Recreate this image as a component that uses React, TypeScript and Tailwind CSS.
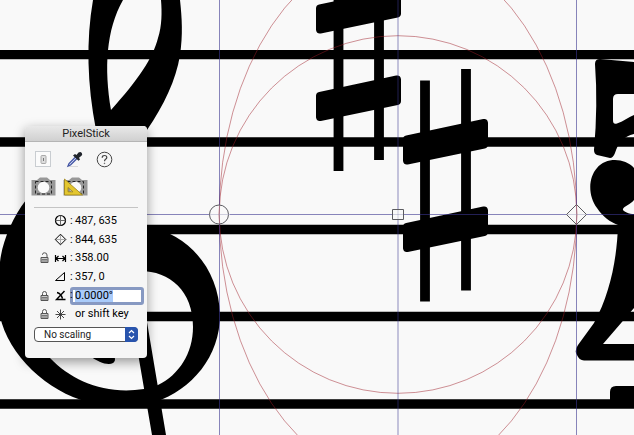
import { useEffect, useRef, type ReactNode } from "react";

const slab = "M320 96L397 79.500V101L320 117Z";

function Score() {
  return (
    <svg
      className="absolute inset-0 h-full w-full"
      viewBox="0 0 634 435"
      preserveAspectRatio="xMinYMin slice"
      aria-hidden="true"
    >
      {/* staff */}
      <path d="M0 54.700H634M0 142H634M0 229.500H634M0 316.500H634M0 404H634" stroke="#000" strokeWidth="9.300" />

      {/* clef */}
      <path
        fillRule="evenodd"
        d="M93 0C86 40 87 84 96 130H147C164 105 176 80 180 55C183 35 182 18 180 0ZM123 0C106 30 104 68 111 110C138 80 153 58 158 38C162 26 162 12 161 0Z"
      />
      <path
        fillRule="evenodd"
        d="M26 200C12 218 2 243 0 262V316C8 355 48 392 88 402H155C192 390 220 356 220 315C219 270 190 235 147 226L100 200ZM140 271C170 271 193 291 193 327C193 353 179 375 158 385L144 389C105 395 72 381 50 358L40 300Z"
      />
      <path d="M134 330L152 435H166L147 322ZM90 356C98 362 108 366 113 363C116 361 115 358 114 355Z" />

      {/* sharps */}
      <path d="M338.500 0V171M379 0V160M425 80.500V301.500M466 69V290.500" stroke="#000" strokeWidth="9.800" />
      <g stroke="#000" strokeWidth="8" strokeLinejoin="round">
        <path d={slab} />
        <path d={slab} transform="translate(0 -87.500)" />
        <path d={slab} transform="translate(87 43.500)" />
        <path d={slab} transform="translate(87 131)" />
      </g>

      {/* time signature */}
      <path d="M634 62L600 59Q595 59 595 64Q598 105 594 150Q594 154 597 155L610 158Q613 158 615 153C618 143 624 136 634 134V115C629 117 624 121 617 123.500Q613 125 613 120V99Q613 94 618 94H634Z" />
      <path d="M634 168C625 158 606 157 597 168C588 178 588 196 597 208C603 217 610 222 618 225C617 259 610 294 594 323L578 345Q574 351 577 355Q579 360 584 360.500H634V344H603L634 308V214C629 214 622 211 623 209C624 206 630 205 634 200Z" />
      <path d="M610 404V392Q610 386 616 386H634V404Z" />

      {/* guides */}
      <g fill="none" stroke="#9c1b25" strokeOpacity=".48">
        <circle cx="398" cy="214.500" r="178.800" />
        <ellipse cx="398" cy="214.500" rx="178.800" ry="267" />
      </g>
      <g stroke="#3a3590" strokeOpacity=".6">
        <path d="M0 214.500H209.500M229.500 214.500H392.500M403.500 214.500H566.500M586.500 214.500H634M219.500 0V205M219.500 224V435M576.500 0V205M576.500 224V435" />
      </g>
      <path d="M398 0V209M398 220V435" stroke="#3a3590" strokeOpacity=".28" strokeWidth="2" />
      <g fill="none" stroke="#5b5b60">
        <circle cx="219" cy="214.500" r="9.500" />
        <path d="M392.500 209.500H403.500V219.500H392.500ZM576.500 204.500L586.500 214.500L576.500 224.500L566.500 214.500Z" />
      </g>
      <path d="M210 214.500H229M393 214.500H403M219.500 205V224M398 210V219M567 214.500H586M576.500 205V224" stroke="#8f8fb5" strokeOpacity=".4" />
    </svg>
  );
}

function Glyph({ children }: { children: ReactNode }) {
  return (
    <svg className="h-[13px] w-[13px]" viewBox="0 0 13 13" fill="none" stroke="#000" strokeWidth="1.200" aria-hidden="true">
      {children}
    </svg>
  );
}

function Lock({ open, label }: { open?: boolean; label: string }) {
  return (
    <button type="button" aria-label={label} className="flex">
      <svg className="h-[12px] w-[9px]" viewBox="0 0 9 12" fill="none" stroke="#555">
        <path d={open ? "M2.500 3V2.500Q2.500 .800 4.500 .800Q7 .800 7 3V5" : "M2.500 5V3.500Q2.500 1.500 4.500 1.500Q6.500 1.500 6.500 3.500V5"} />
        <path d="M1 5.500H8V10.500H1Z" fill="#ccc" />
        <path d="M1.500 7.500H7.500M1.500 9H7.500" stroke="#777" />
      </svg>
    </button>
  );
}

function Value({ children }: { children: ReactNode }) {
  return (
    <span className="flex whitespace-nowrap">
      <span className="w-[5px]">:</span>
      {children}
    </span>
  );
}

function Camera({ ruler }: { ruler?: boolean }) {
  return (
    <svg className="h-[20px] w-[25px]" viewBox="0 0 25 20" aria-hidden="true">
      <path d="M.500 3H6L9 .500H16L19 3H24.500V18.500H.500Z" fill="#989898" />
      <circle cx="12.500" cy="10.500" r="5.800" fill="#fafafa" />
      <rect x="4.500" y="4.500" width="16" height="12.500" fill="none" stroke="#222" strokeDasharray="3 2" />
      {ruler && (
        <path d="M1.500 2V18H19.500ZM5 10.500V14.800H10Z" fill="#e3c62f" stroke="#9a8016" strokeWidth=".800" fillRule="evenodd" />
      )}
    </svg>
  );
}

function Toolbar() {
  return (
    <div className="flex flex-col gap-[9px] px-[6px] pt-[8px]">
      <div className="flex h-[18px] items-center">
        <button type="button" aria-label="Toggle" className="ml-[4px] flex h-[16px] w-[16px] items-center justify-center border border-[#c9cdd1] bg-[#fbfbfb]">
          <svg className="h-[9px] w-[7px]" viewBox="0 0 7 9" fill="#ddd" stroke="#aaa">
            <rect x="1" y=".500" width="5" height="8" rx="1" />
            <path d="M3.500 3V6" stroke="#777" />
          </svg>
        </button>
        <button type="button" aria-label="Pick colour" className="ml-[15px]">
          <svg className="h-[17px] w-[17px]" viewBox="0 0 17 17">
            <path d="M2 15.500H12" stroke="#d9d9d9" />
            <path d="M10 5.500L3 12.500L2 15L4.500 14L11.500 7" fill="#dce6ff" stroke="#4254a3" strokeWidth="1.300" />
            <path d="M7 4.500L9 3L10.500 4L12.500 1.500Q14.500.300 15.800 2Q16.800 3.500 15.500 4.800L13 6.800L14 8.500L12.500 9.800Z" fill="#20242b" />
          </svg>
        </button>
        <button type="button" aria-label="Help" className="ml-[13px]">
          <svg className="h-[17px] w-[17px]" viewBox="0 0 17 17" fill="none" stroke="#444">
            <circle cx="8.500" cy="8.500" r="7.300" />
            <path d="M6.200 6.700Q6.200 4.500 8.500 4.500Q10.800 4.500 10.800 6.500Q10.800 7.500 9.600 8.200Q8.500 8.900 8.500 10.200" strokeWidth="1.200" />
            <circle cx="8.500" cy="12.300" r=".400" fill="#444" strokeWidth=".600" />
          </svg>
        </button>
      </div>
      <div className="flex gap-[7px]">
        <button type="button" aria-label="Screenshot">
          <Camera />
        </button>
        <button type="button" aria-label="Screenshot with ruler">
          <Camera ruler />
        </button>
      </div>
    </div>
  );
}

function Readouts() {
  const angle = useRef<HTMLInputElement>(null);

  useEffect(() => {
    angle.current?.focus();
    angle.current?.select();
  }, []);

  return (
    <div className="grid grid-cols-[11px_13px_1fr] grid-rows-[19px_19px_18px_19px_19px_18px] items-center gap-x-[3px] pr-[3px] pl-[15px]">
      <span />
      <Glyph>
        <circle cx="6.500" cy="6.500" r="5" />
        <path d="M6.500 1.500V11.500M1.500 6.500H11.500" stroke="#666" strokeWidth="1" />
      </Glyph>
      <Value>487, 635</Value>

      <span />
      <Glyph>
        <path d="M6.500 1.200L11.800 6.500L6.500 11.800L1.200 6.500Z" strokeWidth="1" />
        <path d="M6.500 2V11M2 6.500H11" stroke="#aaa" strokeWidth="1" />
      </Glyph>
      <Value>844, 635</Value>

      <Lock open label="Lock distance" />
      <Glyph>
        <path d="M1.500 3V10M11.500 3V10M2 6.500H11M4.500 4L2 6.500L4.500 9M8.500 4L11 6.500L8.500 9" />
      </Glyph>
      <Value>358.00</Value>

      <span />
      <Glyph>
        <path d="M1.500 10.500H10.500V2.500Z" strokeWidth="1" />
      </Glyph>
      <Value>357, 0</Value>

      <Lock label="Lock angle" />
      <Glyph>
        <path d="M10.500 2L2.500 10.500H11.500M3 3.500Q7 4.500 8.500 9.500" strokeWidth="1.400" />
      </Glyph>
      <div className="relative">
        <label htmlFor="angle" className="absolute top-px left-0">
          :
        </label>
        <input
          id="angle"
          ref={angle}
          aria-label="Angle"
          defaultValue="0.0000°"
          className="block h-[18px] w-full rounded-[3px] border-3 border-[#8799c2] bg-white pl-[2px] text-[11px] leading-[12px] outline-none selection:bg-[#a9cbfa] selection:text-black"
        />
      </div>

      <Lock label="Lock to axis" />
      <Glyph>
        <path d="M6.500 1.500V11.500M1.500 6.500H11.500M3 3L10 10M10 3L3 10" stroke="#333" strokeWidth=".900" />
      </Glyph>
      <span className="pl-[5px] whitespace-nowrap">or shift key</span>
    </div>
  );
}

function Scaling() {
  return (
    <div className="relative mx-[9px] mt-[4px] mb-[16px]">
      <select
        aria-label="Scaling"
        className="block h-[15px] w-full appearance-none rounded-[4px] border border-[#555] bg-white pl-[9px] text-[10px] leading-[13px] text-[#222]"
      >
        <option>No scaling</option>
        <option>Scale by 2</option>
      </select>
      <span className="pointer-events-none absolute inset-y-0 right-0 flex w-[13px] items-center justify-center rounded-r-[4px] bg-[#2854ad]">
        <svg className="h-[11px] w-[7px]" viewBox="0 0 7 11" fill="none" stroke="#fff" strokeWidth="1.200" aria-hidden="true">
          <path d="M1 4L3.500 1.500L6 4M1 7L3.500 9.500L6 7" />
        </svg>
      </span>
    </div>
  );
}

export default function App() {
  return (
    <main className="relative min-h-screen overflow-hidden bg-[#f9f9f9] font-['Roboto',sans-serif]">
      <Score />
      <section
        aria-label="PixelStick"
        className="absolute top-[126px] left-[25px] w-[122px] overflow-hidden rounded-[4px] bg-[#f6f6f6] text-[11px] leading-[14px] text-black shadow-[0_4px_12px_rgba(0,0,0,0.4)]"
      >
        <h1 className="flex h-[16px] items-center justify-center border-b border-[#b5b5b5] bg-linear-to-b from-[#e9e9e9] to-[#d0d0d0] text-[11px] text-[#222]">
          PixelStick
        </h1>
        <Toolbar />
        <hr className="mx-[9px] mt-[10px] mb-[3px] border-[#c4c4c4]" />
        <Readouts />
        <Scaling />
      </section>
    </main>
  );
}
